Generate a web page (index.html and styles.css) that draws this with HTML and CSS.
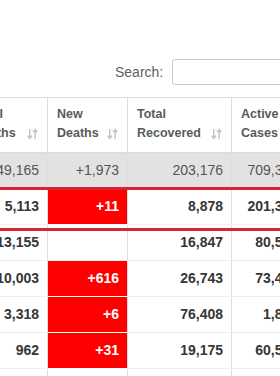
FILE: index.html
```html
<!DOCTYPE html>
<html>
<head>
<meta charset="utf-8">
<link rel="stylesheet" href="styles.css">
</head>
<body>
<div class="page">
  <div class="search">
    <label class="search-label" for="q">Search:</label>
    <input id="q" class="search-input" type="search">
  </div>
  <div class="table-wrap">
    <table class="stats">
      <colgroup>
        <col class="c1"><col class="c2"><col class="c3"><col class="c4">
      </colgroup>
      <thead>
        <tr>
          <th><div class="hcell"><span>Total<br>Deaths</span><svg class="sort" width="11" height="12" viewBox="0 0 11 12"><path d="M2.8 1v9M0.6 7.8l2.2 2.7 2.2-2.7M8.2 11V2M6 4.2l2.2-2.7 2.2 2.7" fill="none" stroke="#c6c6c6" stroke-width="1.5"/></svg></div></th>
          <th><div class="hcell"><span>New<br>Deaths</span><svg class="sort" width="11" height="12" viewBox="0 0 11 12"><path d="M2.8 1v9M0.6 7.8l2.2 2.7 2.2-2.7M8.2 11V2M6 4.2l2.2-2.7 2.2 2.7" fill="none" stroke="#c6c6c6" stroke-width="1.5"/></svg></div></th>
          <th><div class="hcell"><span>Total<br>Recovered</span><svg class="sort" width="11" height="12" viewBox="0 0 11 12"><path d="M2.8 1v9M0.6 7.8l2.2 2.7 2.2-2.7M8.2 11V2M6 4.2l2.2-2.7 2.2 2.7" fill="none" stroke="#c6c6c6" stroke-width="1.5"/></svg></div></th>
          <th><div class="hcell"><span>Active<br>Cases</span><svg class="sort" width="11" height="12" viewBox="0 0 11 12"><path d="M2.8 1v9M0.6 7.8l2.2 2.7 2.2-2.7M8.2 11V2M6 4.2l2.2-2.7 2.2 2.7" fill="none" stroke="#c6c6c6" stroke-width="1.5"/></svg></div></th>
        </tr>
      </thead>
      <tbody>
        <tr class="total">
          <td>149,165</td><td>+1,973</td><td>203,176</td><td>709,340</td>
        </tr>
        <tr>
          <td>5,113</td><td class="hot">+11</td><td>8,878</td><td>201,331</td>
        </tr>
        <tr>
          <td>13,155</td><td></td><td>16,847</td><td>80,591</td>
        </tr>
        <tr>
          <td>10,003</td><td class="hot">+616</td><td>26,743</td><td>73,433</td>
        </tr>
        <tr>
          <td>3,318</td><td class="hot">+6</td><td>76,408</td><td>1,894</td>
        </tr>
        <tr>
          <td>962</td><td class="hot">+31</td><td>19,175</td><td>60,569</td>
        </tr>
        <tr>
          <td>&nbsp;</td><td></td><td></td><td></td>
        </tr>
      </tbody>
    </table>
    <div class="mark"></div>
  </div>
</div>
</body>
</html>
```

FILE: styles.css
```css
html, body {
  margin: 0;
  padding: 0;
  background: #fff;
  overflow: hidden;
}
body {
  width: 280px;
  height: 376px;
  font-family: "Liberation Sans", Arial, sans-serif;
}
.page {
  margin-left: -36px;
  width: 380px;
}
.search {
  display: flex;
  align-items: center;
  gap: 9px;
  padding-left: 151px;
  margin-top: 59px;
  height: 26px;
}
.search-label {
  font-size: 14px;
  color: #5f5f5f;
}
.search-input {
  box-sizing: border-box;
  width: 200px;
  height: 26px;
  border: 1px solid #c8c8c8;
  border-radius: 3px;
  background: #fff;
  margin: 0;
  padding: 0 6px;
  outline: none;
}
.table-wrap {
  position: relative;
  margin-top: 12px;
}
.stats {
  border-collapse: collapse;
  table-layout: fixed;
  width: 342px;
}
.c1 { width: 83px; }
.c2 { width: 80px; }
.c3 { width: 104px; }
.c4 { width: 75px; }
.stats th {
  border: 1px solid #dcdcdc;
  padding: 7px 9px 9px 9px;
  font-size: 12.5px;
  line-height: 19px;
  font-weight: bold;
  color: #5a5a5a;
  text-align: left;
  vertical-align: bottom;
  height: 38px;
}
.hcell {
  display: flex;
  align-items: flex-end;
  justify-content: space-between;
}
.sort {
  display: block;
  margin-bottom: 3px;
  flex: none;
}
.stats td {
  border-left: 1px solid #dedede;
  border-right: 1px solid #dedede;
  border-top: 1px solid #eeeeee;
  border-bottom: 1px solid #eeeeee;
  padding: 9px 8px 9px 8px;
  height: 17px;
  line-height: 17px;
  font-size: 14px;
  font-weight: bold;
  color: #363636;
  text-align: right;
  white-space: nowrap;
  overflow: hidden;
}
.stats tr.total td {
  background: #e2e2e2;
  font-weight: normal;
  color: #555;
  border-top: 1px solid #d4d4d4;
  border-bottom: 1px solid #dcdcdc;
}
.stats td.hot {
  background: #ff0000;
  color: #fff;
  border-top: 1px solid #fff;
  border-bottom: 1px solid #fff;
}
.mark {
  position: absolute;
  left: 0;
  width: 380px;
  top: 90px;
  height: 38px;
  border-top: 3px solid #d42530;
  border-bottom: 3px solid #d42530;
  pointer-events: none;
}
```
